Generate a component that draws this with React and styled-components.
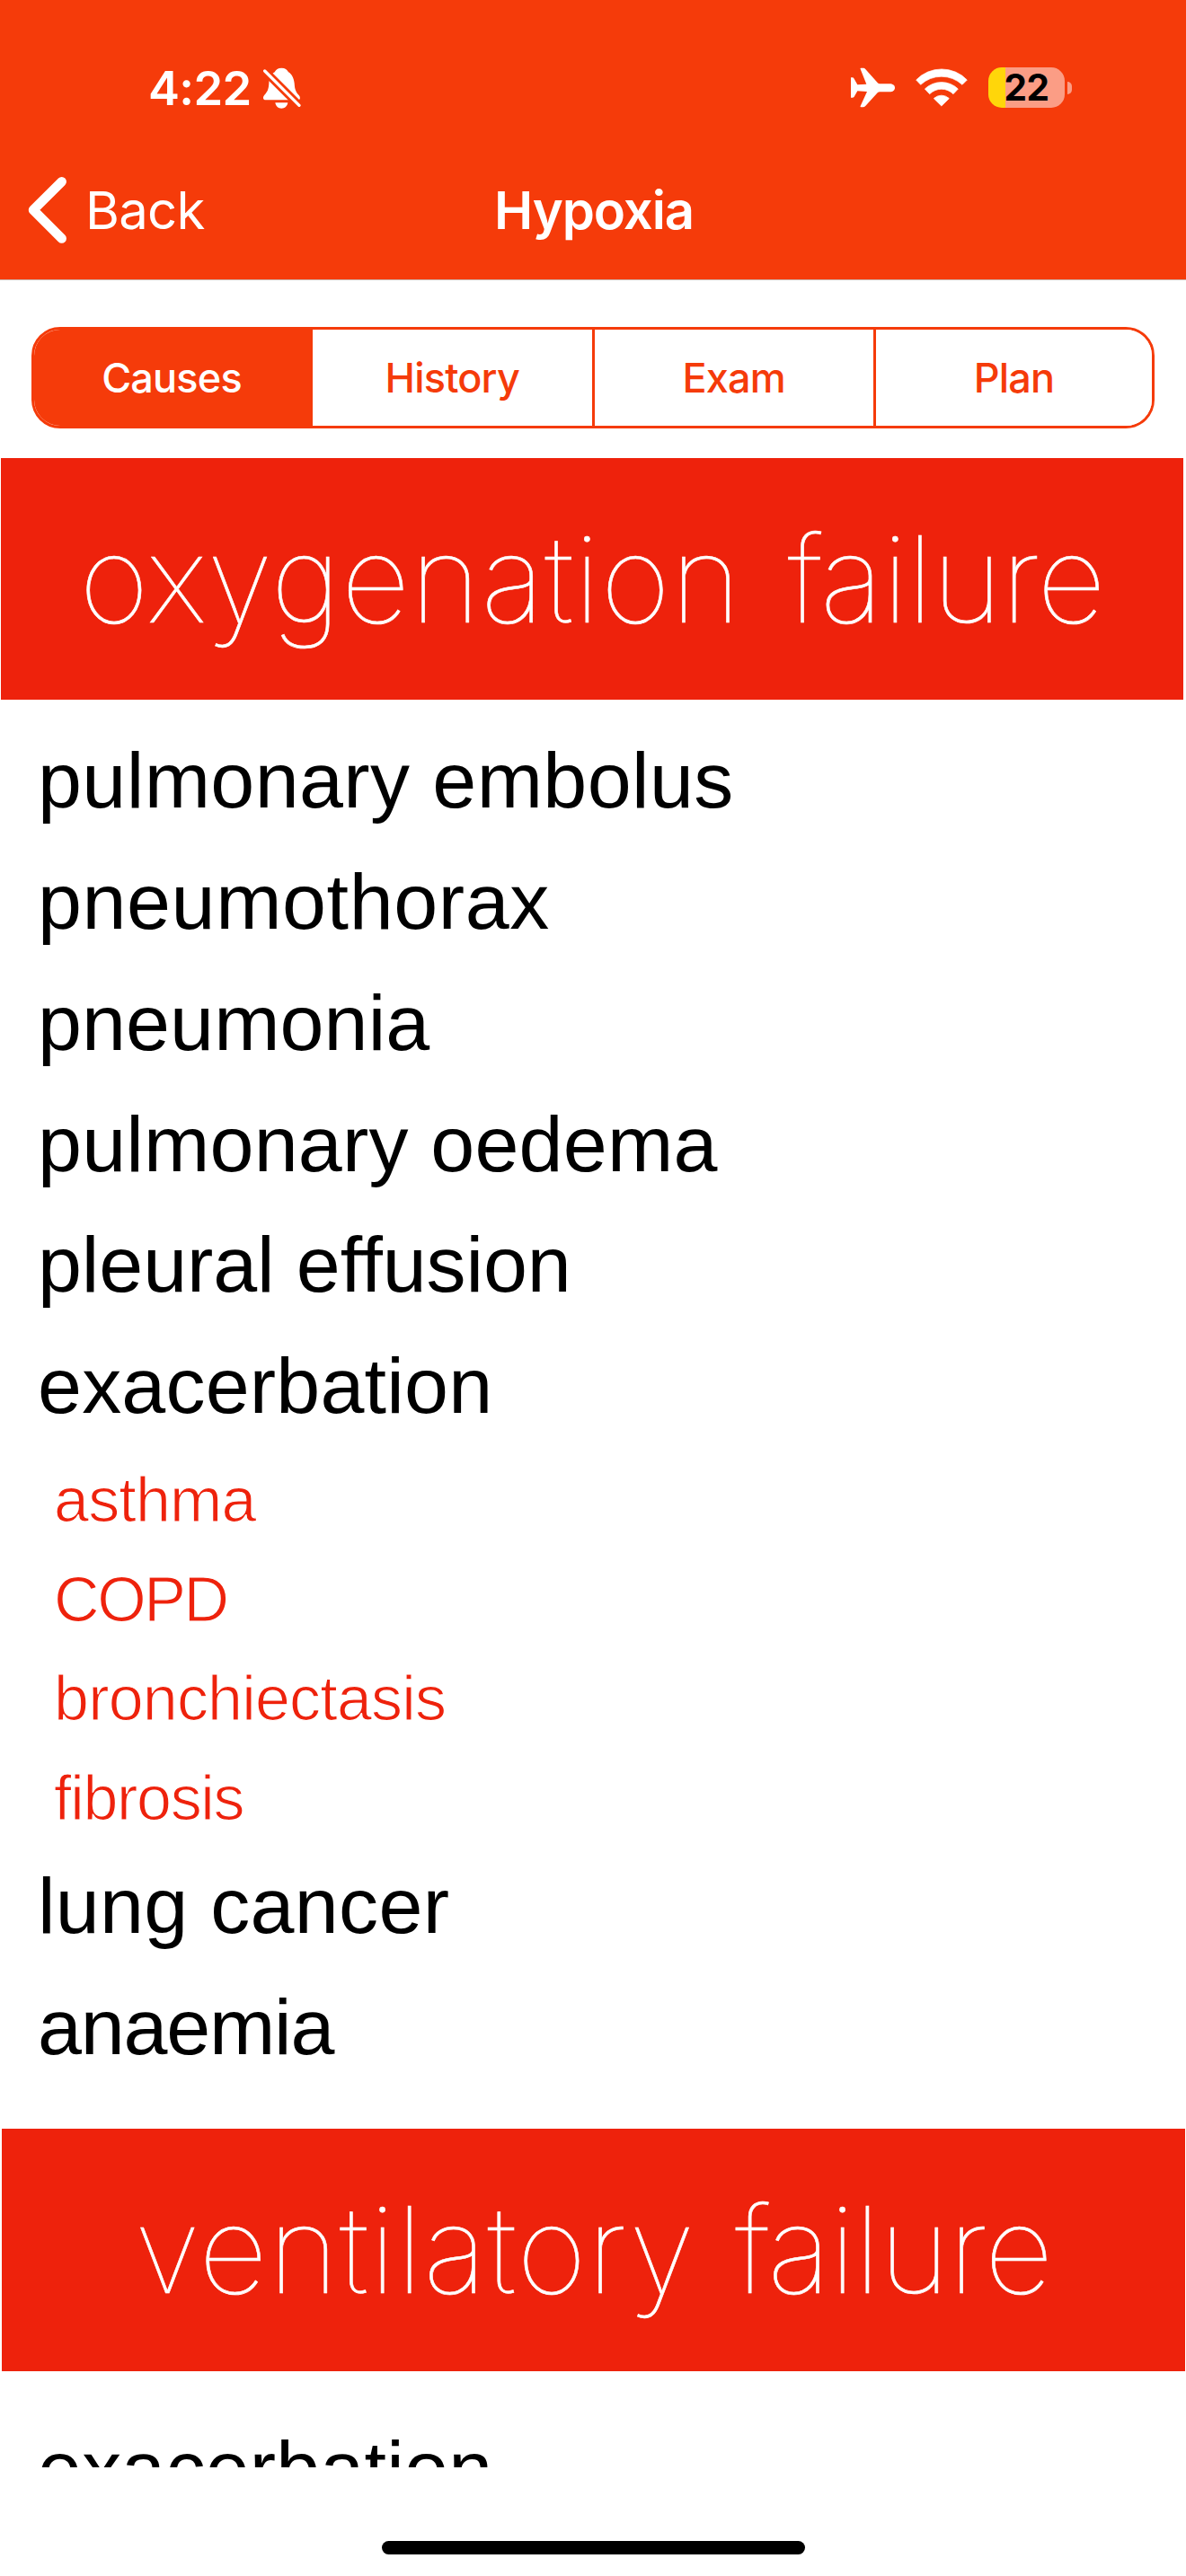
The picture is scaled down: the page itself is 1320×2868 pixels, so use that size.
import React from "react";
import styled, { createGlobalStyle } from "styled-components";

const ORANGE = "#f53b0a";
const RED = "#ee220c";
const UI_FONT = 'Inter, "Liberation Sans", sans-serif';
const BODY_FONT = '"Liberation Sans", Arial, sans-serif';

const GlobalStyle = createGlobalStyle`
  * { box-sizing: border-box; }
  body { margin: 0; background: #fff; }
`;

const Screen = styled.div`
  width: 1320px;
  height: 2868px;
  display: flex;
  flex-direction: column;
  background: #fff;
  overflow: hidden;
`;

const Header = styled.header`
  height: 312px;
  flex: none;
  background: ${ORANGE};
  border-bottom: 1px solid #c9b2aa;
  color: #fff;
  font-family: ${UI_FONT};
`;

const StatusBar = styled.div`
  display: flex;
  justify-content: space-between;
  align-items: center;
  height: 156px;
  padding: 39px 127px 0 165px;
`;

const StatusGroup = styled.div`
  display: flex;
  align-items: center;
  gap: ${(p) => p.$gap}px;
`;

const Clock = styled.span`
  font-size: 52.5px;
  font-weight: 600;
  line-height: 60px;
  letter-spacing: -0.6px;
`;

const Battery = styled.div`
  display: flex;
  align-items: center;
  gap: 3px;
`;

const BatteryBody = styled.div`
  width: 85px;
  height: 45px;
  border-radius: 15px;
  background: linear-gradient(90deg, #ffd60a 19px, #fb9d85 19px);
  color: #000;
  display: flex;
  align-items: center;
  justify-content: center;
  font-size: 40.5px;
  font-weight: 700;
  line-height: 45px;
  letter-spacing: -0.4px;
`;

const BatteryTip = styled.div`
  width: 5px;
  height: 14px;
  border-radius: 0 6px 6px 0;
  background: #fb9d85;
`;

const NavBar = styled.nav`
  display: grid;
  grid-template-columns: 1fr auto 1fr;
  align-items: center;
  height: 155px;
  padding: 0 28px 0 30px;
`;

const BackButton = styled.button`
  display: flex;
  align-items: center;
  gap: 19px;
  padding: 0;
  border: 0;
  background: none;
  color: inherit;
  font: 400 58px/70px ${UI_FONT};
  letter-spacing: -0.7px;
`;

const Title = styled.h1`
  margin: 0;
  font-size: 58px;
  font-weight: 600;
  line-height: 70px;
  letter-spacing: -1.1px;
`;

const Segments = styled.div`
  display: grid;
  grid-template-columns: 310px 310.5px 313.5px 1fr;
  flex: none;
  height: 113px;
  margin: 52px 35px 33px;
  border: 3px solid ${ORANGE};
  border-radius: 32px;
  overflow: hidden;
`;

const Segment = styled.button`
  border: 0;
  border-left: ${(p) => (p.$divided ? 3 : 0)}px solid ${ORANGE};
  padding: 0 ${(p) => (p.$active ? 4 : 0)}px 0 0;
  background: ${(p) => (p.$active ? ORANGE : "#fff")};
  color: ${(p) => (p.$active ? "#fff" : ORANGE)};
  font: 500 45px/54px ${UI_FONT};
  letter-spacing: -0.8px;
`;

const Content = styled.main`
  height: 2237px;
  flex: none;
  overflow: hidden;
`;

const Banner = styled.h2`
  display: flex;
  align-items: center;
  justify-content: center;
  height: ${(p) => p.$height}px;
  margin: ${(p) => p.$margin};
  background: ${RED};
  color: #fff;
  font: 100 133.5px/160px ${UI_FONT};
  -webkit-text-stroke: 0.6px #fff;
`;

const BannerText = styled.span`
  white-space: pre;
  word-spacing: ${(p) => p.$wordSpacing}px;
`;

const Word = styled.span`
  letter-spacing: ${(p) => p.$tracking}px;
`;

const CauseList = styled.ul`
  list-style: none;
  margin: 0;
  padding: ${(p) => p.$top}px 0 0 42px;
`;

const Cause = styled.li`
  font: 400 88px/134.9px ${BODY_FONT};
  letter-spacing: ${(p) => p.$tracking}px;
  color: #000;
`;

const SubList = styled.ul`
  list-style: none;
  margin: 4px 0 -3px;
  padding: 0 0 0 18px;
`;

/* The background-coloured outline trims the regular face down to a light weight. */
const SubCause = styled.li`
  font: 400 70px/110.6px ${BODY_FONT};
  letter-spacing: ${(p) => p.$tracking}px;
  color: ${RED};
  -webkit-text-stroke: 1.2px #fff;
`;

const HomeArea = styled.footer`
  display: flex;
  flex: 1;
  justify-content: center;
  align-items: flex-end;
  padding-bottom: 24px;
`;

const HomeIndicator = styled.div`
  width: 471px;
  height: 15px;
  border-radius: 8px;
  background: #000;
`;

const BellOff = () => (
  <svg width="42" height="46" viewBox="879 105 126 138">
    <path
      fill="#fff"
      d="M940 107C928 107 921 113 917 121C903 128 899 143 898 158C897 178 893 186 883 197C876 205 878 214 887 214H994C1003 214 1004 205 998 198C988 187 984 178 983 158C981 141 974 127 963 121C959 113 952 107 940 107ZM919 223H961C959 235 951 242 940 242C929 242 921 235 919 223Z"
    />
    <path d="M876 109L1012 245" stroke={ORANGE} strokeWidth="27" />
    <path d="M884 117L999 232" stroke="#fff" strokeWidth="10" strokeLinecap="round" />
  </svg>
);

const Airplane = () => (
  <svg width="49" height="45" viewBox="141 107 147 135">
    <path
      fill="#fff"
      d="M288 175C288 167 281 162 270 162H238Q233 162 230 158L189 112Q187 109 183 109H175Q171 109 173 113L193 163L163 165L152 145Q150 141 146 141H141V208H146Q150 208 152 205L163 186L195 188L173 236Q171 240 175 240H182Q186 240 189 237L230 192Q233 189 238 189H270C281 189 288 183 288 175Z"
    />
  </svg>
);

const Wifi = () => (
  <svg width="58" height="43" viewBox="359 104 174 129">
    <g fill="#fff" stroke="#fff" strokeWidth="2" strokeLinejoin="round">
      <path d="M361 143A118 118 0 0 1 531 143L515 159A102 102 0 0 0 376 159Z" />
      <path d="M390 173A80 80 0 0 1 501 173L485 190A56 56 0 0 0 406 190Z" />
      <path d="M420 205A36 36 0 0 1 471 205L445.500 230Z" />
    </g>
  </svg>
);

const Chevron = () => (
  <svg width="46" height="76" viewBox="30 196 46 76">
    <path
      d="M68.700 202.300L37 233.800L68.700 265.500"
      fill="none"
      stroke="#fff"
      strokeWidth="10.500"
      strokeLinecap="round"
      strokeLinejoin="round"
    />
  </svg>
);

const tabs = ["Causes", "History", "Exam", "Plan"];
const oxygenation = [
  { name: "pulmonary embolus", tracking: 0.4 },
  { name: "pneumothorax", tracking: 0.6 },
  { name: "pneumonia", tracking: 0.1 },
  { name: "pulmonary oedema", tracking: 0.2 },
  { name: "pleural effusion", tracking: -0.1 },
  { name: "exacerbation", tracking: 0.2 },
];
const exacerbations = [
  { name: "asthma", tracking: -0.8 },
  { name: "COPD", tracking: -2.4 },
  { name: "bronchiectasis", tracking: -0.8 },
  { name: "fibrosis", tracking: -1.3 },
];
const others = [
  { name: "lung cancer", tracking: 0.3 },
  { name: "anaemia", tracking: -1.2 },
];

const renderCause = ({ name, tracking }) => (
  <Cause key={name} $tracking={tracking}>
    {name}
  </Cause>
);

export default function App() {
  return (
    <Screen>
      <GlobalStyle />
      <Header>
        <StatusBar>
          <StatusGroup $gap={13}>
            <Clock>4:22</Clock>
            <BellOff />
          </StatusGroup>
          <StatusGroup $gap={23}>
            <Airplane />
            <Wifi />
            <Battery>
              <BatteryBody>22</BatteryBody>
              <BatteryTip />
            </Battery>
          </StatusGroup>
        </StatusBar>
        <NavBar>
          <BackButton>
            <Chevron />
            Back
          </BackButton>
          <Title>Hypoxia</Title>
        </NavBar>
      </Header>
      <Segments>
        {tabs.map((tab, i) => (
          <Segment key={tab} $divided={i > 1} $active={i === 0}>
            {tab}
          </Segment>
        ))}
      </Segments>
      <Content>
        <Banner $height={269.4} $margin="0 3.5px 0 1.3px">
          <BannerText $wordSpacing={14}>
            <Word $tracking={0.7}>oxygenation</Word> <Word $tracking={-1.1}>failure</Word>
          </BannerText>
        </Banner>
        <CauseList $top={22.4}>
          {oxygenation.map(renderCause)}
          <SubList>
            {exacerbations.map(({ name, tracking }) => (
              <SubCause key={name} $tracking={tracking}>
                {name}
              </SubCause>
            ))}
          </SubList>
          {others.map(renderCause)}
        </CauseList>
        <Banner $height={270} $margin="45.6px 1px 0 2px">
          <BannerText $wordSpacing={6.5}>
            <Word $tracking={1.2}>ventilatory</Word> <Word $tracking={-1.1}>failure</Word>
          </BannerText>
        </Banner>
        <CauseList $top={41.5}>
          <Cause $tracking={0.2}>exacerbation</Cause>
        </CauseList>
      </Content>
      <HomeArea>
        <HomeIndicator />
      </HomeArea>
    </Screen>
  );
}
